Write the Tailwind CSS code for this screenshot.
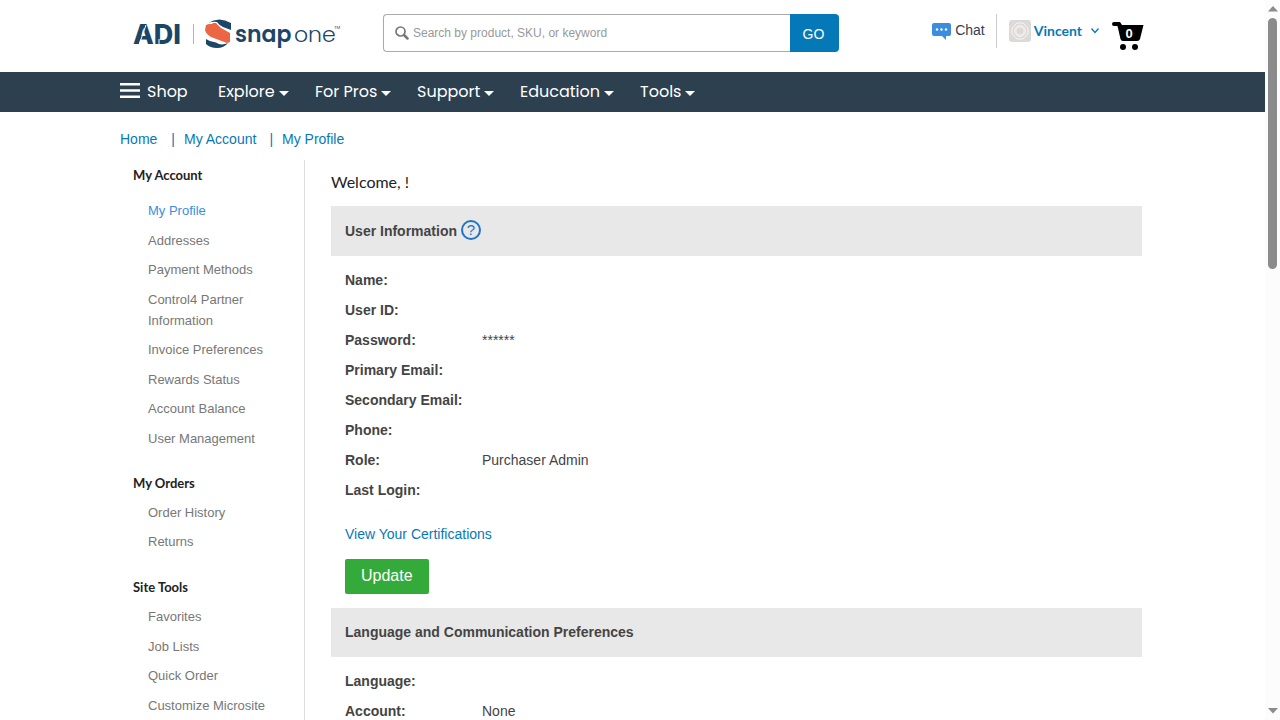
<!DOCTYPE html>
<html lang="en">
<head>
<meta charset="utf-8">
<meta name="viewport" content="width=device-width, initial-scale=1">
<title>My Profile</title>
<script src="https://cdn.jsdelivr.net/npm/@tailwindcss/browser@4"></script>
</head>
<body class="flex h-screen overflow-hidden bg-white font-['Liberation_Sans',Arial,sans-serif] text-sm text-[#444]">
<div class="min-w-0 flex-1 overflow-hidden">
  <header class="mx-auto flex h-[72px] max-w-[1025px] items-start">
    <a href="#" aria-label="ADI Snap One" class="mt-4 ml-[13px] shrink-0">
      <svg width="212" height="36" viewBox="0 0 212 36" fill="#1c4668">
        <text x="0" y="28" font-family="Inter, sans-serif" font-weight="800" font-size="27">ADI</text>
        <path d="M6 29 13 9M26 23V29" stroke="#fff" stroke-width="1" fill="none"/>
        <path d="M60.500 8V28" stroke="#a9b5c1" stroke-width="1"/>
        <path d="M75 7Q86 0 98 7V14L90 11Q86 9 84 6Q80 5 75 7Z"/>
        <path d="M73 9 76 8 79 8 80 7 83 7 88 12 97 17V26L94 27 78 21Q73 18 72 14Z" fill="#ec6544"/>
        <path d="M73 23Q77 26 83 26.500Q88 30 95 27Q91 32 84 32Q77 32 73 28Z"/>
        <text x="102" y="26" font-family="Poppins, Inter, sans-serif" font-weight="600" font-size="22">snap</text>
        <text x="161" y="26" font-family="Poppins, Inter, sans-serif" font-weight="300" font-size="22">one</text>
        <text x="201" y="13" font-family="Inter, sans-serif" font-size="4">TM</text>
      </svg>
    </a>
    <form class="mt-[14px] ml-[38px] flex h-[38px] w-[456px] shrink-0" onsubmit="return false">
      <label class="flex min-w-0 flex-1 items-center gap-1 rounded-l border border-r-0 border-[#aaa] pl-[11px]">
        <svg width="14" height="14" viewBox="0 0 14 14" fill="none" stroke="#777" class="shrink-0"><circle cx="5.500" cy="5.500" r="4.500" stroke-width="1.700"/><path d="m9 9 3.500 3.500" stroke-width="2.500" stroke-linecap="round"/></svg>
        <input type="search" aria-label="Search" placeholder="Search by product, SKU, or keyword" class="min-w-0 flex-1 text-xs outline-none placeholder:text-[#999]">
      </label>
      <button class="w-[49px] rounded-r bg-[#0579b8] pt-[2px] pr-[2px] text-sm text-white">GO</button>
    </form>
    <div class="mt-[14px] ml-auto flex h-[38px] items-start">
      <a href="#" class="flex h-[34px] items-center gap-1 border-r border-[#ccc] pr-[11px] pb-[2px] text-[#333f50]">
        <svg width="19" height="18" viewBox="0 0 19 18" class="mt-[2px]"><path d="M2 1H17Q19 1 19 3V12Q19 14 17 14H14V18L10 14H2Q0 14 0 12V3Q0 1 2 1Z" fill="#3b8ede"/><g fill="#fff"><circle cx="5" cy="7.500" r="1.200"/><circle cx="9.500" cy="7.500" r="1.200"/><circle cx="14" cy="7.500" r="1.200"/></g></svg>
        Chat</a>
      <button class="ml-3 flex h-[34px] items-center font-['Lato',sans-serif] text-sm font-bold text-[#0579b8]">
        <svg width="22" height="22" viewBox="0 0 22 22" class="mr-[3px]"><rect width="22" height="22" rx="3" fill="#dcd9d7"/><g fill="none" stroke="#f8f7f6" stroke-width=".9"><path d="M8 3H14L19 8V14L14 19H8L3 14V8Z"/><circle cx="11" cy="11" r="5.500"/><path d="M9 7H13L15 9V13L13 15H9L7 13V9Z"/></g></svg>
        Vincent
        <svg width="8" height="6" viewBox="0 0 8 6" fill="none" stroke="#0579b8" stroke-width="1.300" class="ml-[9px]"><path d="m.5.500 3.500 4 3.500-4"/></svg>
      </button>
      <a href="#" aria-label="Cart, 0 items" class="mt-[7px] mr-px ml-[13px]">
        <svg width="32" height="30" viewBox="0 0 32 30"><path d="M2 1H8L10 4H31.500L28 18Q27.500 20 25 20H11Q9 20 8.500 18L5.500 5H2Q0 5 0 3T2 1Z"/><circle cx="11" cy="26" r="3"/><circle cx="23" cy="26" r="3"/><text x="17" y="17" text-anchor="middle" fill="#fff" font-family="Liberation Sans" font-weight="700" font-size="13">0</text></svg>
      </a>
    </div>
  </header>
  <nav class="bg-[#2d4050] font-[Poppins,Inter,sans-serif] text-base text-white">
    <ul class="mx-auto flex h-10 max-w-[1025px] items-center">
      <li class="w-[98px]"><button class="flex items-center gap-[7px]"><svg width="20" height="15" viewBox="0 0 20 15" fill="#fff" class="mb-[3px]"><path d="M0 0H20V2.500H0ZM0 6.200H20V8.700H0ZM0 12.400H20V15H0Z"/></svg>Shop</button></li>
      <li class="w-[97px]"><button class="flex items-center gap-1">Explore<svg width="10" height="5" fill="#fff" class="mt-[2px]"><path d="M0 0H10L5 5Z"/></svg></button></li>
      <li class="w-[102px]"><button class="flex items-center gap-1">For Pros<svg width="10" height="5" fill="#fff" class="mt-[2px]"><path d="M0 0H10L5 5Z"/></svg></button></li>
      <li class="w-[103px]"><button class="flex items-center gap-1">Support<svg width="10" height="5" fill="#fff" class="mt-[2px]"><path d="M0 0H10L5 5Z"/></svg></button></li>
      <li class="w-[120px]"><button class="flex items-center gap-1">Education<svg width="10" height="5" fill="#fff" class="mt-[2px]"><path d="M0 0H10L5 5Z"/></svg></button></li>
      <li><button class="flex items-center gap-1">Tools<svg width="10" height="5" fill="#fff" class="mt-[2px]"><path d="M0 0H10L5 5Z"/></svg></button></li>
    </ul>
  </nav>
  <div class="mx-auto max-w-[1025px]">
    <nav aria-label="Breadcrumb" class="flex h-12 items-center pt-[6px] text-[#0579b8]">
      <a href="#">Home</a><span class="mr-[9px] ml-[14px]">|</span><a href="#">My Account</a><span class="mr-[9px] ml-[13px]">|</span><a href="#">My Profile</a>
    </nav>
    <div class="flex">
      <aside class="w-[185px] shrink-0 border-r border-[#ddd] pt-[5px] pl-[13px] text-[13px] leading-[21px] text-[#777]">
        <h2 class="mb-[14px] font-['Lato',sans-serif] font-bold text-[#222]">My Account</h2>
        <ul class="mb-6 flex min-h-[249px] flex-col justify-between pl-[15px]">
          <li><a href="#" class="text-[#3b8ede]">My Profile</a></li>
          <li><a href="#">Addresses</a></li>
          <li><a href="#">Payment Methods</a></li>
          <li><a href="#">Control4 Partner<br>Information</a></li>
          <li><a href="#">Invoice Preferences</a></li>
          <li><a href="#">Rewards Status</a></li>
          <li><a href="#">Account Balance</a></li>
          <li><a href="#">User Management</a></li>
        </ul>
        <h2 class="mb-2 font-['Lato',sans-serif] font-bold text-[#222]">My Orders</h2>
        <ul class="mb-[25px] flex flex-col gap-2 pl-[15px]">
          <li><a href="#">Order History</a></li>
          <li><a href="#">Returns</a></li>
        </ul>
        <h2 class="mb-2 font-['Lato',sans-serif] font-bold text-[#222]">Site Tools</h2>
        <ul class="flex min-h-[110px] flex-col justify-between pl-[15px]">
          <li><a href="#">Favorites</a></li>
          <li><a href="#">Job Lists</a></li>
          <li><a href="#">Quick Order</a></li>
          <li><a href="#">Customize Microsite</a></li>
        </ul>
      </aside>
      <main class="min-w-0 flex-1 pt-[10px] pr-[3px] pl-[26px]">
        <h1 class="mb-3 font-['Lato',sans-serif] text-base text-[#222]">Welcome, !</h1>
        <h2 class="mb-[9px] flex h-[50px] items-center gap-1 bg-[#e8e8e8] px-[14px] font-bold">User Information
          <button aria-label="Help" class="mb-[2px] h-5 w-5 rounded-full border-2 border-[#1f74c9] text-[15px] leading-4 font-normal text-[#1f74c9]">?</button>
        </h2>
        <dl class="grid grid-cols-[137px_1fr] px-[14px] leading-[30px]">
          <dt class="font-bold">Name:</dt><dd></dd>
          <dt class="font-bold">User ID:</dt><dd></dd>
          <dt class="font-bold">Password:</dt><dd>******</dd>
          <dt class="font-bold">Primary Email:</dt><dd></dd>
          <dt class="font-bold">Secondary Email:</dt><dd></dd>
          <dt class="font-bold">Phone:</dt><dd></dd>
          <dt class="font-bold">Role:</dt><dd>Purchaser Admin</dd>
          <dt class="font-bold">Last Login:</dt><dd></dd>
        </dl>
        <div class="flex flex-col items-start gap-[15px] px-[14px] pt-[19px] pb-[14px]">
          <a href="#" class="text-[#0579b8]">View Your Certifications</a>
          <button class="h-[35px] rounded-[2px] bg-[#33aa39] px-4 pb-[2px] text-base text-white">Update</button>
        </div>
        <h2 class="mb-[9px] flex h-[49px] items-center bg-[#e8e8e8] px-[14px] pb-px font-bold">Language and Communication Preferences</h2>
        <dl class="grid grid-cols-[137px_1fr] px-[14px] leading-[30px]">
          <dt class="font-bold">Language:</dt><dd></dd>
          <dt class="font-bold">Account:</dt><dd>None</dd>
        </dl>
      </main>
    </div>
  </div>
</div>
<div aria-hidden="true" class="flex w-[15px] shrink-0 flex-col items-center bg-[#fcfcfc] py-[6px]">
  <svg width="10" height="6" fill="#8b8b8b"><path d="M0 5.500H10L5 0Z"/></svg>
  <div class="mt-[6px] h-[251px] w-[9px] rounded-full bg-[#8b8b8b]"></div>
  <svg width="10" height="6" fill="#8b8b8b" class="mt-auto"><path d="M0 0H10L5 5.500Z"/></svg>
</div>
</body>
</html>
